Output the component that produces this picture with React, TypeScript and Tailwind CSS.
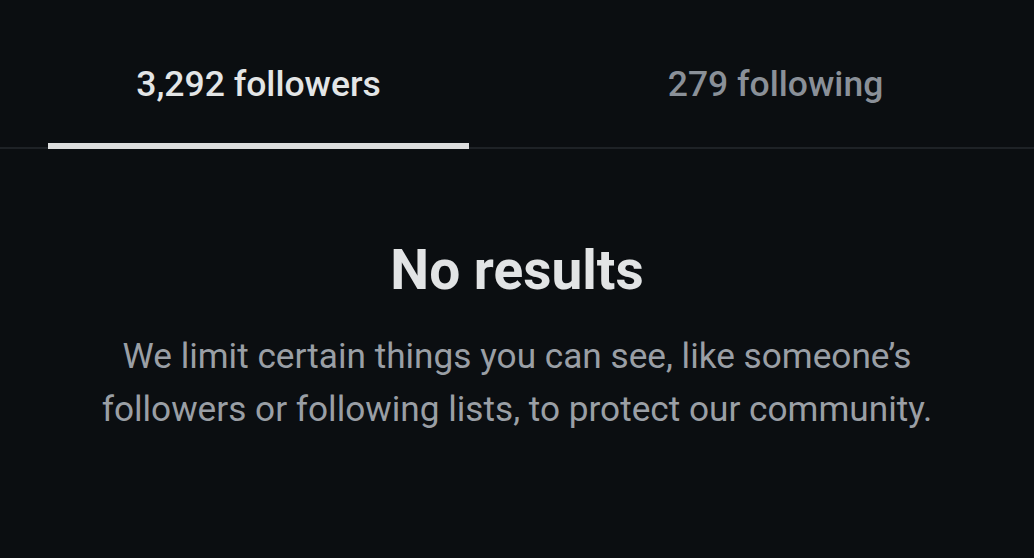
import React from 'react';

export default function App() {
  return (
    <div className="w-[1034px] h-[558px] bg-[#0b0e11] overflow-hidden" style={{ fontFamily: 'Roboto, "Noto Sans", sans-serif' }}>
      {/* Tabs */}
      <div className="flex border-b-2 border-[#1e2226]">
        <div className="flex-1 flex flex-col items-center px-12">
          <div className="h-[143px] flex items-center justify-center text-[35.5px] font-medium text-[#e3e5e6] pt-[27px]">
            3,292 followers
          </div>
          <div className="w-full h-[6px] bg-[#dcdddd] -mb-[2px]" />
        </div>
        <div className="flex-1 flex flex-col items-center px-12">
          <div className="h-[143px] flex items-center justify-center text-[35.5px] font-medium text-[#8a9098] pt-[27px]">
            279 following
          </div>
        </div>
      </div>

      {/* Empty state */}
      <div className="flex flex-col items-center text-center pt-[94px]">
        <h2 className="text-[55px] font-bold leading-none text-[#e2e4e5]">No results</h2>
        <p className="mt-[32px] text-[35.2px] leading-[53px] text-[#9a9fa5] max-w-[860px]">
          We limit certain things you can see, like someone’s followers or following lists, to protect our community.
        </p>
      </div>
    </div>
  );
}
